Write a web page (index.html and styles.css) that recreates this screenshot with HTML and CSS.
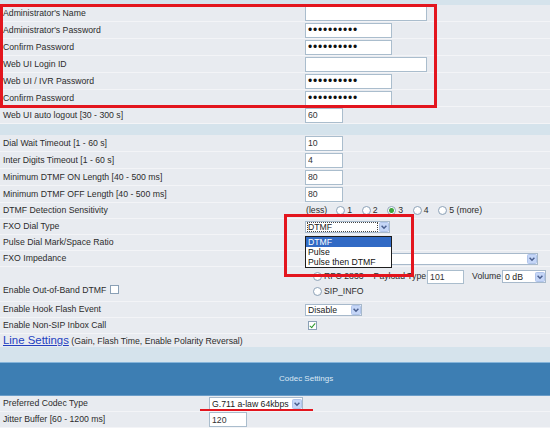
FILE: index.html
```html
<!DOCTYPE html>
<html lang="en">
<head>
<meta charset="utf-8">
<title>Voice - FXO Settings</title>
<link rel="stylesheet" href="styles.css">
</head>
<body>
<div class="page">
  <div class="band band-top"></div>

  <div class="rows">
    <div class="row"><div class="lbl">Administrator's Name</div><div class="ctl"><input class="txt w-long" type="text"></div></div>
    <div class="row"><div class="lbl">Administrator's Password</div><div class="ctl"><input class="txt pw w-mid" type="password" value="xxxxxxxxxx"></div></div>
    <div class="row"><div class="lbl">Confirm Password</div><div class="ctl"><input class="txt pw w-mid" type="password" value="xxxxxxxxxx"></div></div>
    <div class="row"><div class="lbl">Web UI Login ID</div><div class="ctl"><input class="txt w-long" type="text"></div></div>
    <div class="row"><div class="lbl">Web UI / IVR Password</div><div class="ctl"><input class="txt pw w-mid" type="password" value="xxxxxxxxxx"></div></div>
    <div class="row"><div class="lbl">Confirm Password</div><div class="ctl"><input class="txt pw w-mid" type="password" value="xxxxxxxxxx"></div></div>
    <div class="row"><div class="lbl">Web UI auto logout [30 - 300 s]</div><div class="ctl"><input class="txt w-short" type="text" value="60"></div></div>
  </div>

  <div class="band band-mid"></div>

  <div class="rows">
    <div class="row"><div class="lbl">Dial Wait Timeout [1 - 60 s]</div><div class="ctl"><input class="txt w-short" type="text" value="10"></div></div>
    <div class="row"><div class="lbl">Inter Digits Timeout [1 - 60 s]</div><div class="ctl"><input class="txt w-short" type="text" value="4"></div></div>
    <div class="row"><div class="lbl">Minimum DTMF ON Length [40 - 500 ms]</div><div class="ctl"><input class="txt w-short" type="text" value="80"></div></div>
    <div class="row"><div class="lbl">Minimum DTMF OFF Length [40 - 500 ms]</div><div class="ctl"><input class="txt w-short" type="text" value="80"></div></div>
    <div class="row s">
      <div class="lbl">DTMF Detection Sensitivity</div>
      <div class="ctl sens">
        <span class="less">(less)</span>
        <label class="opt"><input type="radio" name="sens">1</label>
        <label class="opt"><input type="radio" name="sens">2</label>
        <label class="opt"><input type="radio" name="sens" checked>3</label>
        <label class="opt"><input type="radio" name="sens">4</label>
        <label class="opt last"><input type="radio" name="sens">5 (more)</label>
      </div>
    </div>
    <div class="row s">
      <div class="lbl">FXO Dial Type</div>
      <div class="ctl"><div class="sel w-dial"><span class="sel-val focus">DTMF</span><svg class="sel-btn" viewBox="0 0 10 10"><rect x="0.5" y="0.5" width="9" height="9" rx="1" fill="#c5d6f7" stroke="#b0c4ea"/><path d="M2.6 3.8 L5 6.2 L7.4 3.8" fill="none" stroke="#4a5f8e" stroke-width="1.5"/></svg></div></div>
    </div>
    <div class="row s"><div class="lbl">Pulse Dial Mark/Space Ratio</div><div class="ctl"></div></div>
    <div class="row s">
      <div class="lbl">FXO Impedance</div>
      <div class="ctl"><div class="sel w-imp"><span class="sel-val"></span><svg class="sel-btn" viewBox="0 0 10 10"><rect x="0.5" y="0.5" width="9" height="9" rx="1" fill="#c5d6f7" stroke="#b0c4ea"/><path d="M2.6 3.8 L5 6.2 L7.4 3.8" fill="none" stroke="#4a5f8e" stroke-width="1.5"/></svg></div></div>
    </div>
    <div class="row oob">
      <div class="lbl oob-lbl">Enable Out-of-Band DTMF <input class="chk" type="checkbox"></div>
      <div class="ctl oob-ctl">
        <div class="oob-line">
          <input type="radio" name="oob">
          <span class="rfc">RFC 2833</span>
          <span class="pt">Payload Type</span>
          <input class="txt w-pay" type="text" value="101">
          <span class="vol">Volume</span>
          <div class="sel w-vol"><span class="sel-val">0 dB</span><svg class="sel-btn" viewBox="0 0 10 10"><rect x="0.5" y="0.5" width="9" height="9" rx="1" fill="#c5d6f7" stroke="#b0c4ea"/><path d="M2.6 3.8 L5 6.2 L7.4 3.8" fill="none" stroke="#4a5f8e" stroke-width="1.5"/></svg></div>
        </div>
        <div class="oob-line">
          <input type="radio" name="oob">
          <span class="rfc">SIP_INFO</span>
        </div>
      </div>
    </div>
    <div class="row s">
      <div class="lbl">Enable Hook Flash Event</div>
      <div class="ctl"><div class="sel w-hook"><span class="sel-val">Disable</span><svg class="sel-btn" viewBox="0 0 10 10"><rect x="0.5" y="0.5" width="9" height="9" rx="1" fill="#c5d6f7" stroke="#b0c4ea"/><path d="M2.6 3.8 L5 6.2 L7.4 3.8" fill="none" stroke="#4a5f8e" stroke-width="1.5"/></svg></div></div>
    </div>
    <div class="row s">
      <div class="lbl">Enable Non-SIP Inbox Call</div>
      <div class="ctl"><input class="chk nonsip" type="checkbox" checked></div>
    </div>
    <div class="row link-row">
      <div class="lbl"><a class="link" href="#">Line Settings</a> (Gain, Flash Time, Enable Polarity Reversal)</div>
    </div>
  </div>

  <div class="band band-low"></div>

  <div class="head"><span></span><span class="head-title">Codec Settings</span></div>

  <div class="rows">
    <div class="row s codec">
      <div class="lbl">Preferred Codec Type</div>
      <div class="ctl"><div class="sel w-codec"><span class="sel-val">G.711 a-law 64kbps</span><svg class="sel-btn" viewBox="0 0 10 10"><rect x="0.5" y="0.5" width="9" height="9" rx="1" fill="#c5d6f7" stroke="#b0c4ea"/><path d="M2.6 3.8 L5 6.2 L7.4 3.8" fill="none" stroke="#4a5f8e" stroke-width="1.5"/></svg></div></div>
    </div>
    <div class="row s codec">
      <div class="lbl">Jitter Buffer [60 - 1200 ms]</div>
      <div class="ctl"><input class="txt w-short" type="text" value="120"></div>
    </div>
  </div>

  <!-- open list of the FXO Dial Type select -->
  <ul class="menu">
    <li class="on">DTMF</li>
    <li>Pulse</li>
    <li>Pulse then DTMF</li>
  </ul>

  <!-- highlight marks -->
  <div class="mark mark-admin"></div>
  <div class="mark mark-dial"></div>
  <div class="underline"></div>
</div>
</body>
</html>
```

FILE: styles.css
```css
* { box-sizing: border-box; }

body {
  margin: 0;
  width: 550px;
  height: 428px;
  overflow: hidden;
  background: #e8ebf0;
  font: 8.7px/1 "Liberation Sans", Arial, sans-serif;
  color: #2c2c2c;
}

.page {
  position: relative;
  width: 550px;
  height: 428px;
  overflow: hidden;
}

.band { background: #d5e3ec; }
.band-top { height: 5px; }
.band-mid { height: 11px; }
.band-low { height: 15px; }

.row {
  display: grid;
  grid-template-columns: 305px 1fr;
  align-items: center;
  height: 17px;
  background: #e8ebf0;
  border-bottom: 1px solid #f3f4f7;
}
.row.s { height: 16px; }
.row.codec { grid-template-columns: 209px 1fr; }

.lbl {
  padding-left: 3px;
  white-space: nowrap;
}

.ctl {
  display: flex;
  align-items: center;
}

/* text fields */
input.txt {
  height: 15px;
  margin: 0;
  padding: 0 2px;
  border: 1px solid #aabdcd;
  background: #fff;
  font: inherit;
  color: #333;
  outline: none;
}
input.pw {
  font-size: 12px;
  letter-spacing: 0.8px;
  color: #111;
}
.w-long { width: 122px; }
.w-mid { width: 87px; }
.w-short { width: 38px; }
.w-pay { width: 37px; height: 14px !important; }

/* drop-down boxes */
.sel {
  display: flex;
  align-items: center;
  height: 12px;
  border: 1px solid #a7b9cb;
  background: #fff;
}
.sel-val {
  flex: 1;
  height: 10px;
  line-height: 10px;
  padding-left: 2px;
  white-space: nowrap;
  overflow: hidden;
  color: #222;
}
.sel-val.focus {
  margin: 0 1px;
  padding-left: 1px;
  outline: 1px dotted #444;
  outline-offset: -1px;
}
.sel-btn {
  flex: none;
  width: 10px;
  height: 10px;
}
.w-dial { width: 85px; }
.w-imp { width: 233px; }
.w-hook { width: 57px; }
.w-vol { width: 44px; height: 13px; }
.w-codec { width: 94px; height: 13px; }

/* radio buttons */
input[type=radio] {
  appearance: none;
  -webkit-appearance: none;
  width: 9px;
  height: 9px;
  margin: 0;
  border: 1px solid #8fa4b9;
  border-radius: 50%;
  background: radial-gradient(circle at 40% 40%, #fff 0 45%, #dfe6ec 100%);
  flex: none;
}
input[type=radio]:checked {
  background: radial-gradient(circle, #3da43d 0 2px, #9fd49f 2.6px, #fff 3px);
}

.sens { color: #2c2c2c; }
.less { margin-left: 1px; margin-right: 9px; }
.opt {
  display: inline-flex;
  align-items: center;
  gap: 2px;
  width: 25.5px;
}
.opt.last { width: auto; }

/* check boxes */
input.chk {
  appearance: none;
  -webkit-appearance: none;
  position: relative;
  width: 9px;
  height: 9px;
  margin: 0 0 0 1px;
  border: 1px solid #8aa0b6;
  background: #fff;
  vertical-align: -1px;
}
input.chk:checked::after {
  content: "";
  position: absolute;
  left: 2px;
  top: 0;
  width: 2px;
  height: 5px;
  border: solid #2e9a2e;
  border-width: 0 1.5px 1.5px 0;
  transform: rotate(40deg);
}
.nonsip { margin-left: 3px !important; }

/* out-of-band DTMF row */
.row.oob {
  height: 35px;
  align-items: start;
}
.oob-lbl { padding-top: 18px; }
.oob-ctl {
  flex-direction: column;
  align-items: flex-start;
  padding-top: 2px;
}
.oob-line {
  display: flex;
  align-items: center;
  height: 15px;
  padding-left: 8px;
}
.oob-line .rfc { margin-left: 2px; }
.oob-line .pt { margin-left: 10px; margin-right: 1px; }
.oob-line .vol { margin-left: 8px; margin-right: 1px; }

/* link row */
.row.link-row {
  height: 13px;
  border-bottom: 0;
  grid-template-columns: 1fr;
}
.link {
  font-size: 11.4px;
  color: #2340c0;
  text-decoration: underline;
}

/* section header */
.head {
  display: grid;
  grid-template-columns: 279px 1fr;
  align-items: center;
  height: 34px;
  background: #3d7eb3;
  border-top: 1px solid #86b5da;
  border-bottom: 1px solid #6b9dc8;
  color: #dce8f3;
  font-size: 8px;
}

/* open option list */
.menu {
  position: absolute;
  left: 305px;
  top: 236px;
  width: 87px;
  margin: 0;
  padding: 0;
  list-style: none;
  border: 1px solid #1e1e1e;
  background: #fff;
}
.menu li {
  height: 10px;
  line-height: 10px;
  padding-left: 2px;
  color: #111;
}
.menu li.on {
  background: #316ac5;
  color: #fff;
}

/* red highlight marks */
.mark {
  position: absolute;
  border: 3px solid #e3151e;
}
.mark-admin { left: 0; top: 4px; width: 437px; height: 104px; }
.mark-dial { left: 284px; top: 214px; width: 130px; height: 63px; }
.underline {
  position: absolute;
  left: 200px;
  top: 409px;
  width: 113px;
  height: 2px;
  background: #e3151e;
}
```
